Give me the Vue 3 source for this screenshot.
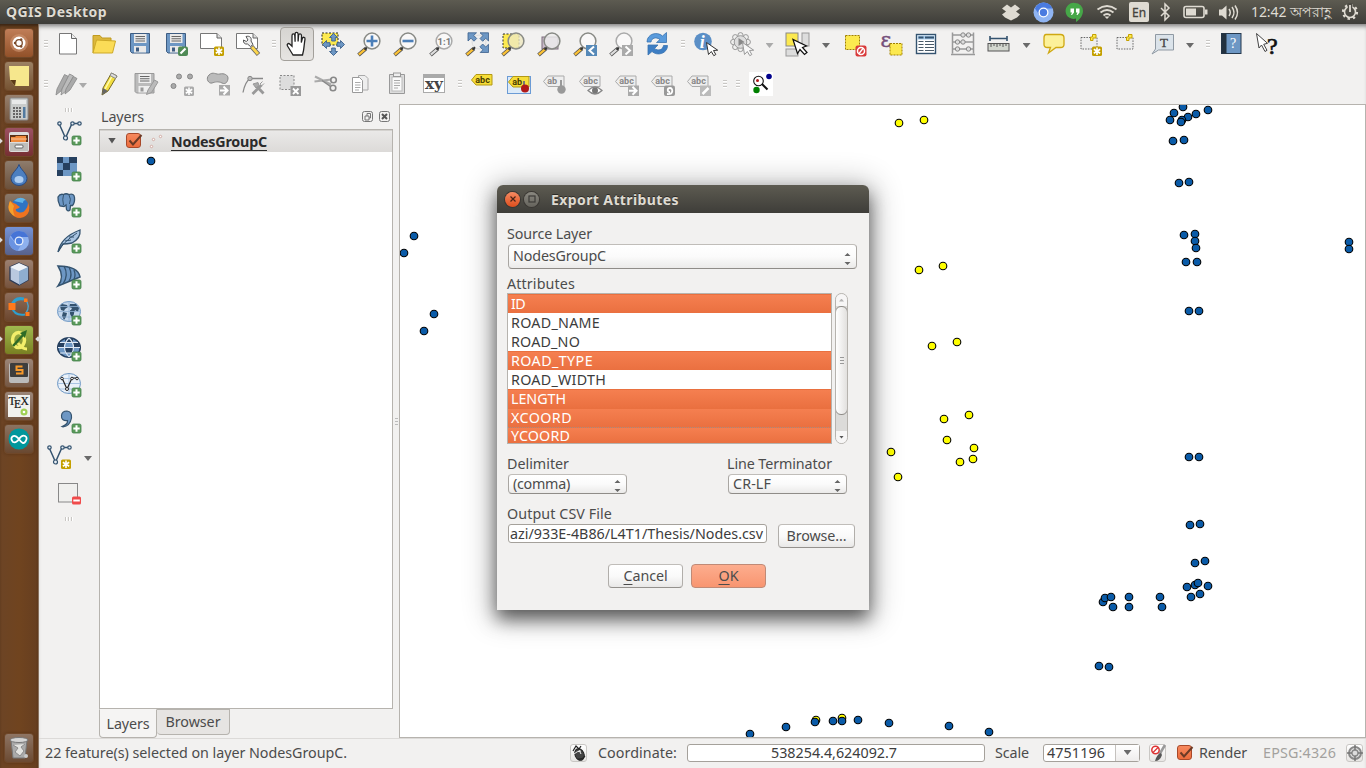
<script setup>
// Adjusts tracking so a label occupies the given width in pixels.
const vFit = {
  mounted(el, { value }) {
    const natural = el.getBoundingClientRect().width
    el.style.letterSpacing = (value - natural) / el.textContent.length + 'px'
  }
}

const plus = '<rect x="15" y="15" width="9" height="9" rx="1.5" fill="#5a9a5a" stroke="#41804a" stroke-width=".8"/><path d="M19.5 16.3v6.4M16.3 19.5h6.4" stroke="#fff" stroke-width="2"/>'
const star = (a = '#c4a000') => `<rect x="14" y="14.500" width="10" height="9.500" rx="1.5" fill="${a}"/><path d="M19 15.500v7.500M15.800 17.300l6.400 3.900M22.200 17.300l-6.400 3.900" stroke="#fff" stroke-width="1.600"/>`
const lens = (c = '#888a85', h = '#fcc235', f = '#fafafa') => `<path d="M1.500 23l7.500-6.500" stroke="#555" stroke-width="3.800"/><path d="M1.800 22.700l6.500-5.600" stroke="${h}" stroke-width="2.200"/><path d="M7.500 17.800l3-3" stroke="#333" stroke-width="2"/><circle cx="15" cy="9" r="7.900" fill="${f}" fill-opacity=".8" stroke="${c}" stroke-width="1.500"/>`
const floppy = (a, b, l) => `<path d="M2.500 1.500h19v19.500h-17.500l-1.500-1.500z" fill="${a}" stroke="${b}"/><rect x="6" y="2" width="12.500" height="9" fill="${l}"/><path d="M7.500 4.500h9.500M7.500 6.800h9.500M7.500 9h9.500" stroke="#666" stroke-width="1.100"/><rect x="6" y="14" width="12" height="6.500" fill="${l}"/><rect x="8" y="15.500" width="3" height="4" fill="${b}"/>`
const cursor = (f = '#fff', s = '#333') => `<path d="M12.500 10.500l2 12 2.800-3 2.500 4.200 2-1.200-2.300-4 4.200-.3z" fill="${f}" stroke="${s}"/>`
const tag = (f, s, t, txt = 'abc') => `<path d="M.5 9.500l4.500-5.500h16v10.500h-16z" fill="${f}" stroke="${s}"/><text x="4.300" y="12" font-family="Roboto" font-size="9" font-weight="700" fill="${t}">${txt}</text>`
const gtag = tag('#eee', '#aaa', '#888')
const vee = '<path d="M2 2.500l6.500 14.500 6.500-14.500h7" fill="none" stroke="#34536f" stroke-width="1.500"/><g fill="#e8eef5" stroke="#34536f" stroke-width="1.200"><circle cx="2.500" cy="2.500" r="1.700"/><circle cx="8.500" cy="17" r="2"/><circle cx="15.500" cy="2.500" r="1.700"/><circle cx="22.500" cy="2.500" r="1.700"/></g>'
const sheet = '<path d="M.5 1.500h16.500l4.500 4.500v10.500h-21z" fill="#fff" stroke="#777"/><path d="M17 1.500v4.500h4.500" fill="#ddd" stroke="#666"/>'

const icons = {
  new: '<path d="M3.500 1.500h12l5 5v15.500h-17z" fill="#fff" stroke="#777"/><path d="M15.500 1.500v5h5" fill="#eee" stroke="#666"/>',
  open: '<path d="M1 21V3.500h7l2 2.500h9v4" fill="#dcb73d" stroke="#c09b20"/><path d="M1 21l3.500-13 19 1-3 12z" fill="#fbdc57" stroke="#cda927"/>',
  save: floppy('#6d97c4', '#3e5d82', '#e9e9e9'),
  saveas: floppy('#6d97c4', '#3e5d82', '#e9e9e9') + '<rect x="14" y="14.500" width="10" height="9.500" rx="2" fill="#4f8a55"/><path d="M16.500 21.500l5-5" stroke="#fff" stroke-width="2.200"/>',
  composer: sheet + star(),
  manager: sheet + '<path d="M15.500 14.500l7 8" stroke="#666" stroke-width="4.500"/><path d="M16 15l6 7" stroke="#fcd64c" stroke-width="2.800"/><path d="M10 4.500c3.500-1 6 1 5 4.500l2 3.500-2.500 2-3-2.500c-2.500.5-4.500-1-4-4l2.800 1.500 1.700-1.500z" fill="#eee" stroke="#555"/>',
  pan: '<path d="M8 23l-5.500-9c-1-1.600.5-3.400 2.500-1.800l2 2V3.700c0-2.400 2.600-2.400 2.800 0l.3 6V2c0-2.300 2.800-2.300 3 0v7.500l.5-6c.2-2.200 2.900-2 2.900.2l-.2 6.800 1-4c.7-2 3-1.400 2.700.6-.8 5-1 9-1.500 11.500L17.500 23z" fill="#fff" stroke="#222" stroke-width="1.300"/>',
  pansel: '<rect x="1" y="1" width="16" height="12" fill="#fce94f" stroke="#222" stroke-dasharray="2 1.500"/><g fill="#6d97c4" stroke="#3b608b" stroke-width=".9"><path d="M12.500 1.500l4 4h-2.200v3.500h-3.600V5.500H8.500zM12.500 23.500l-4-4h2.200V16h3.600v3.500h2.200zM1.500 12.500l4-4v2.200H9v3.600H5.500v2.200zM23.500 12.500l-4-4v2.200H16v3.600h3.500v2.200z"/></g>',
  zin: lens() + '<path d="M15 3.500v11M9.500 9h11" stroke="#4c7fb8" stroke-width="2.600"/>',
  zout: lens() + '<path d="M9.500 9h11" stroke="#4c7fb8" stroke-width="2.600"/>',
  z11: lens('#aaa', '#ddd') + '<text x="8.500" y="12.500" font-family="Roboto" font-size="9.500" font-weight="700" fill="#777">1:1</text>',
  zfull: '<circle cx="14" cy="10" r="7" fill="#eee" stroke="#ddd"/><g fill="#6d97c4" stroke="#3b608b" stroke-width=".8"><path d="M3 .8h8.500l-2.800 2.700 3 3-2.700 2.700-3-3L3 9zM23.500.8V9l-2.800-2.700-3 3L15 6.500l3-3L15 .8zM23.500 20.500h-8.300l2.700-2.700-3-3 2.800-2.800 3 3 2.800-2.700z"/></g><path d="M1.500 23l7.500-6.500" stroke="#555" stroke-width="3.800"/><path d="M1.800 22.700l6.500-5.600" stroke="#fcc235" stroke-width="2.200"/><path d="M7.500 17.800l2.500-2.500" stroke="#333" stroke-width="2"/>',
  zsel: '<rect x="2" y="2" width="16" height="14" fill="#fce94f" stroke="#333" stroke-dasharray="2 1.500"/>' + lens('#888a85', '#fcc235', '#eee8c0'),
  zlayer: '<rect x="5" y="5" width="16" height="12" fill="#cbbccb" stroke="#7c6c7d"/>' + lens('#888a85', '#fcc235', '#eee'),
  zlast: lens() + '<rect x="13" y="13" width="11" height="11" fill="#5689b8"/><path d="M21 14.500l-4.500 4 4.500 4" fill="none" stroke="#fff" stroke-width="2"/>',
  znext: lens('#aaa', '#ddd') + '<rect x="13" y="13" width="11" height="11" fill="#aaa"/><path d="M16.500 14.500l4.500 4-4.500 4" fill="none" stroke="#fff" stroke-width="2"/>',
  refresh: '<path d="M2 10C2 2 12-1 17.500 4l4-3.500v10h-10L15 7.500C11 4.500 6.500 6 6 10z" fill="#5a9bdc" stroke="#3a73b0" stroke-width=".8"/><path d="M22.500 13.500c0 8-10 11-15.500 6l-4 3.500V13h10l-3.500 3.500c4 3 8.500 1 9-3z" fill="#3d7ec4" stroke="#3a73b0" stroke-width=".8"/>',
  info: '<circle cx="9" cy="9.500" r="8.800" fill="#5b8fc6"/><text x="5.800" y="15.500" font-family="Liberation Serif" font-size="18" font-style="italic" font-weight="700" fill="#fff">i</text>' + cursor(),
  action: '<g fill="#f0f0ef" stroke="#999"><circle cx="10.500" cy="3.200" r="2.600"/><circle cx="15.800" cy="5.200" r="2.600"/><circle cx="17.800" cy="10" r="2.600"/><circle cx="15.800" cy="15" r="2.600"/><circle cx="10.500" cy="17" r="2.600"/><circle cx="5.200" cy="15" r="2.600"/><circle cx="3.200" cy="10" r="2.600"/><circle cx="5.200" cy="5.200" r="2.600"/></g><circle cx="10.500" cy="10" r="6.300" fill="#ddd" stroke="#999"/><path d="M8.500 6l6 4-6 4z" fill="#888"/>' + cursor('#f8f8f8', '#999'),
  select: '<rect x="1" y="1" width="12" height="13" fill="#fce94f" stroke="#888"/><rect x="17" y="1" width="7" height="13" fill="#ddd" stroke="#999"/><rect x="1" y="17" width="12" height="7" fill="#ddd" stroke="#999"/><path d="M8 7.500l4.500 14 2.500-4 4.500 5 2.500-2-4.500-5 4-1.500z" fill="#fff" stroke="#111" stroke-width="1.200"/>',
  deselect: '<rect x="2.500" y="3.500" width="14" height="14" fill="#fce94f" stroke="#a08000" stroke-dasharray="2 1"/><rect x="12.500" y="13.500" width="11" height="11" rx="2" fill="#d93a3a"/><circle cx="18" cy="19" r="3.500" fill="none" stroke="#fff" stroke-width="1.500"/><path d="M20 16.500l-4 5" stroke="#fff" stroke-width="1.300"/>',
  epsilon: '<text x="1.500" y="14.500" font-family="DejaVu Serif" font-size="21" fill="#75507b" stroke="#75507b" stroke-width=".5">ε</text><rect x="11" y="11.500" width="12" height="11.500" fill="#fce94f" stroke="#a08000" stroke-dasharray="2 1"/>',
  table: '<rect x="1.500" y="2.500" width="19" height="19" fill="#fff" stroke="#34536f" stroke-width="1.400"/><rect x="2.500" y="3.500" width="17" height="4" fill="#a9cdec"/><path d="M3.500 5.500h5M10 5.500h9" stroke="#34536f" stroke-width="2"/><path d="M3.500 9.500h5M3.500 12.500h5M3.500 15.500h5M3.500 18.500h5M10 9.500h9M10 12.500h9M10 15.500h9M10 18.500h9" stroke="#4a5a68"/>',
  abacus: '<path d="M1.500.5v21M22.500.5v21M0 22.500h24M1.500 3h21M1.500 10h21M1.500 17h21" stroke="#999" stroke-width="1.500" fill="none"/><g fill="#ddd" stroke="#888"><circle cx="12" cy="3" r="2.200"/><circle cx="17.500" cy="3" r="2.200"/><circle cx="6.500" cy="10" r="2.200"/><circle cx="12" cy="10" r="2.200"/><circle cx="6.500" cy="17" r="2.200"/><circle cx="17.500" cy="17" r="2.200"/></g>',
  measure: '<path d="M3 6.500h17M3 4v5M20 4v5" stroke="#34536f" stroke-width="1.600"/><rect x="1" y="11.500" width="21" height="7.500" fill="#d3d7cf" stroke="#555"/><path d="M4 12v3M7 12v2M10 12v3M13 12v2M16 12v3M19 12v2" stroke="#555"/>',
  tip: '<path d="M4 2.500h14.500q3.500 0 3.500 3.500v6.500q0 3-3.500 3h-4.500l-7.500 5.500 2-5.500H5.500Q2 15.500 2 12.500V6q0-3.500 2-3.500z" fill="#fcf19a" stroke="#cfa812" stroke-width="1.300"/>',
  bmnew: '<rect x="3" y="5.500" width="16" height="11.500" fill="#eee" stroke="#666" stroke-dasharray="1.500 1.200"/><path d="M14.500 2.500h3.500v3.500h-3v2.500h-2.500V5h2z" fill="#fce94f" stroke="#c4a000"/>' + star(),
  bm: '<rect x="3" y="5.500" width="16" height="11.500" fill="#eee" stroke="#666" stroke-dasharray="1.500 1.200"/><path d="M14.500 2.500h3.500v3.500h-3v2.500h-2.500V5h2z" fill="#fce94f" stroke="#c4a000"/>',
  textann: '<path d="M5.500 2.500h18v15.500H8.500l-6.500 4 3.500-5z" fill="#dbe3ea" stroke="#8f99a3"/><text x="10" y="14.800" font-family="Liberation Serif" font-size="13" fill="#444" stroke="#444" stroke-width=".3">T</text>',
  help: '<rect x="2.500" y="1.500" width="19.500" height="20" fill="#6d97c4" stroke="#26394d"/><path d="M5 1.500v20" stroke="#22313f" stroke-width="5"/><text x="11" y="16" font-family="Liberation Serif" font-size="14" fill="#fff">?</text>',
  whats: '<path d="M1.500 1.500l2.500 14.500 2.500-3 3.500 6.500 2-1.200-3.300-6 3.800-1z" fill="#fff" stroke="#444"/><text x="12" y="21.500" font-family="Liberation Serif" font-size="24" fill="#111" stroke="#111" stroke-width=".7">?</text>',
  edits: '<g fill="#aaa" stroke="#888" stroke-width=".8"><path d="M1 23l1-6L9.500 2.500l4 2L6 19z"/><path d="M6 23l1-6L14.500 2l4 2L11 19z" fill="#bbb"/><path d="M10 22l1-5L18.500 4.500l3.500 2L15 18z"/></g>',
  pencil: '<path d="M4 23l1-7L13.500 1l5.500 3L10 19z" fill="#f3de3f" stroke="#776a28"/><path d="M7 17L15 2.500" stroke="#fffbb0" stroke-width="1.500"/><path d="M4 23l1-7 5 3z" fill="#666"/><path d="M13.500 1L19 4l-1.500 2.500-5.500-3z" fill="#ddd" stroke="#888"/>',
  gsave: '<g transform="translate(-1.500 0)">' + floppy('#bbb', '#999', '#eee') + '</g><path d="M12.500 22.500l1.500-4.500L20.500 8l3.500 2L17.500 20.500z" fill="#bbb" stroke="#999"/>',
  addpt: '<g fill="#aaa" stroke="#888"><circle cx="9" cy="4.500" r="2.500"/><circle cx="20" cy="4.500" r="2.500"/><circle cx="3.500" cy="14" r="2.500"/></g>' + star('#aaa'),
  movef: '<path d="M3 3c4-4 7 0 11-1s8 1 8 4-2 7-6 5-7-1-10 0S-1 7 3 3z" fill="#bbb" stroke="#888"/><rect x="13" y="13" width="11" height="10.500" fill="#aaa"/><path d="M14 18.500h6M17.500 14.500l4 4-4 4" fill="none" stroke="#fff" stroke-width="2"/>',
  node: '<path d="M1 20.500Q3 10 8 6.500h13" fill="none" stroke="#888" stroke-width="1.300"/><circle cx="8" cy="6.500" r="2.200" fill="#bbb" stroke="#888"/><path d="M10.500 22l9-9M13.500 13l8 8.500" stroke="#999" stroke-width="2.800"/><path d="M11 12l5-1.500 1 3-3 2.500zM18 12l2.500-2.500M19.500 14l2.500-2.500" fill="#aaa" stroke="#999"/>',
  delsel: '<rect x="2" y="3.500" width="14" height="14" fill="#ddd" stroke="#888" stroke-dasharray="2 1.500"/><rect x="12.500" y="14" width="10.500" height="10" fill="#999"/><path d="M15 16.500l5.500 5.500M20.500 16.500L15 22" stroke="#fff" stroke-width="1.800"/>',
  cut: '<path d="M1 4.500l16 8M.5 9.500l17-2" stroke="#aaa" stroke-width="2.200"/><circle cx="19.500" cy="8" r="2.800" fill="none" stroke="#888" stroke-width="1.600"/><circle cx="19" cy="16" r="2.800" fill="none" stroke="#888" stroke-width="1.600"/><path d="M8 8.500l8.500 6" stroke="#888" stroke-width="1.500"/>',
  copy: '<path d="M8.500 3.500h6.500l3 3V18h-9.500z" fill="#eee" stroke="#aaa"/><path d="M2.500 5.500h7l3 3V20.500h-10z" fill="#fff" stroke="#999"/><path d="M5 10.500h5.500M5 13h5.500M5 15.500h5.500M5 18h4" stroke="#aaa"/>',
  paste: '<path d="M3.500 2.500h15v19h-15z" fill="#ddd" stroke="#999"/><rect x="6" y="5" width="10" height="14" fill="#fafafa" stroke="#bbb"/><rect x="7.500" y="1" width="7" height="3.500" fill="#eee" stroke="#999"/><path d="M8 8.500h6M8 11h6M8 13.500h6M8 16h4" stroke="#aaa"/>',
  xy: '<rect x="1.500" y="2.500" width="21" height="18" fill="#fff" stroke="#aaa"/><rect x="2" y="2.500" width="20" height="3.500" fill="#aaa"/><text x="3" y="17" font-family="DejaVu Serif" font-size="15" font-weight="700" fill="#444" textLength="18" lengthAdjust="spacingAndGlyphs">xy</text>',
  label: '<g transform="translate(0 -1.500)">' + tag('#f6dd39', '#b39914', '#4a4000') + '</g>',
  labelpin: '<rect x=".5" y="4.500" width="23" height="17" fill="#dceaf8" stroke="#6b9bd5"/><g transform="translate(1 .500)">' + tag('#f6dd39', '#b39914', '#4a4000', 'ab') + '</g><path d="M17 9v5" stroke="#777" stroke-width="2"/><circle cx="18" cy="16.500" r="4" fill="#b01818"/>',
  gpin: tag('#eee', '#aaa', '#888', 'ab') + '<path d="M18 8v6" stroke="#999" stroke-width="2"/><circle cx="18.500" cy="17.500" r="4.200" fill="#999"/>',
  geye: gtag + '<path d="M9 18.500q7-7 14 0-7 7-14 0z" fill="#fff" stroke="#888" stroke-width="1.300"/><circle cx="16" cy="18.500" r="3" fill="#777"/>',
  gmove: gtag + '<rect x="13" y="13.500" width="11" height="10.500" fill="#aaa"/><path d="M14 18.800h6M17.500 14.800l4 4-4 4" fill="none" stroke="#fff" stroke-width="2"/>',
  grot: gtag + '<rect x="13" y="13.500" width="11" height="10.500" rx="2" fill="#999"/><path d="M16 22c7 1 6-6 3-6s-3 4 0 4" fill="none" stroke="#fff" stroke-width="1.800"/>',
  gedit: gtag + '<rect x="13" y="13.500" width="11" height="10.500" fill="#bbb"/><path d="M15.500 22l6-6" stroke="#fff" stroke-width="2.500"/>',
  plugin: '<rect width="24" height="24" fill="#fff"/><circle cx="9.500" cy="9" r="4.800" fill="none" stroke="#111" stroke-width="1.100"/><path d="M13 12l5.500 5.500" stroke="#111" stroke-width="2"/><circle cx="8.500" cy="8.500" r="1.500" fill="#b01818"/><circle cx="20" cy="4.500" r="2.800" fill="#00008b"/><circle cx="7.500" cy="18" r="3.200" fill="#008000"/>',
  vector: vee + plus,
  raster: '<rect width="20" height="19" fill="#6d97c4"/><path d="M0 0h6v6H0zM12 0h8v6h-8zM6 6h7v7H6zM0 13h6v6H0z" fill="#26405f"/>' + plus,
  pg: '<path d="M1 4Q3 .5 6.500 1.500 9 0 12 1.500q5-1.500 5.500 3 .5 5-2 8h-2l-.500 4.500q-2 2-3.500-.500l-.500-4.500-2 1.500-4-.500Q.5 8 1 4z" fill="#6d97c4" stroke="#34536f" stroke-width="1.300"/><path d="M6.500 2Q5 6 6.500 12M12 2q2.500 4 .5 9" fill="none" stroke="#34536f"/>' + plus,
  feather: '<path d="M1 23Q4 8 23 1q1 8-8 13-5 1-9 1z" fill="#a9c4e2" stroke="#34536f" stroke-width="1.300"/><path d="M1 23Q6 13 20 4M8 12l6-1M12 8l5 0" fill="none" stroke="#34536f"/>' + plus,
  sail: '<path d="M1 1Q21 1 23 12L1 21Q8 12 1 1z" fill="#6d97c4" stroke="#34536f" stroke-width="1.500"/><path d="M7 1q5 9-1 18M12 2q4 8 0 14M17 5q2 5 0 9" fill="none" stroke="#34536f" stroke-width="1.300"/>' + plus,
  wms: '<ellipse cx="12" cy="10.500" rx="11.500" ry="10" fill="#c4d7ec" stroke="#6d97c4"/><path d="M3 5l2-2 5 1 1 2-3 2-1 2-3-1zM6 11l4 1-1 4-2 3-2-4zM13 3l6 0 3 4-1 4-3-2-1 3-3-3 1-2-3-1zM13 9l4 1 0 3-2 4-2-4z" fill="#34536f"/><path d="M0 10.500h24M12 0v21M2 5.500h20M2 16h20" stroke="#8fb0d4" stroke-width=".8"/>' + plus,
  wcs: '<ellipse cx="12" cy="10.500" rx="11.300" ry="9.800" fill="#6d97c4" stroke="#26405f" stroke-width="1.500"/><path d="M2 5.500h6v5H1zM16 5.500h6l1 5h-7zM8 11h8v5H8zM8 1.500h8l0 4H8z" fill="#26405f"/><path d="M1 10.500h22M3 5.500h18M3 16h18M12 1q-9 9 0 19M12 1q9 9 0 19" fill="none" stroke="#dfe9f5" stroke-width="1.100"/>' + plus,
  wfs: '<ellipse cx="12" cy="10.500" rx="11.500" ry="10" fill="#eaf1f9" stroke="#6d97c4"/><path d="M1 10.500h22M3 5.500h18M3 16h18M12 1v19" stroke="#a9c4e2"/><path d="M5 5l5 11 5-11h5" fill="none" stroke="#222" stroke-width="1.200"/><g fill="#fff" stroke="#222"><circle cx="5" cy="5.500" r="1.300"/><circle cx="10" cy="16" r="1.500"/><circle cx="15" cy="5.500" r="1.300"/><circle cx="20" cy="5.500" r="1.300"/></g>' + plus,
  comma: '<path d="M5 17.500q6-2 5.500-6Q4 12 4.500 6.500 5 2 10 2q5 .5 4.500 7Q13 17 6 18z" fill="#6d97c4" stroke="#34536f" stroke-width="1.200"/>' + plus,
  newvec: vee + star(),
  remove: '<rect x="1.500" y="2.500" width="19" height="18.500" fill="#f0f0ee" stroke="#888"/><rect x="15" y="15.500" width="9" height="8" rx="1.500" fill="#f04b4b"/><path d="M16.300 19.500h6.500" stroke="#fff" stroke-width="2"/>'
}

const cell = n => ({ n, w: 36 })
const cells = s => s.split(' ').map(cell)
const grip = (w = 13) => ({ grip: true, w })
const arrow = (w, dim) => ({ arrow: true, w, dim })

const row1 = [grip(11), ...cells('new open save saveas composer manager'), grip(), { n: 'pan', w: 36, on: true },
  ...cells('pansel zin zout z11 zfull zsel zlayer zlast znext refresh'), grip(), ...cells('info action'), arrow(19, true),
  cell('select'), arrow(22), ...cells('deselect epsilon table abacus measure'), arrow(19), ...cells('tip bmnew bm textann'),
  arrow(20), grip(), ...cells('help whats')]
const row2 = [grip(11), { w: 5 }, { n: 'edits', w: 24 }, arrow(8, true), { w: 5 },
  ...cells('pencil gsave addpt movef node delsel cut copy paste xy'), grip(),
  ...cells('label labelpin gpin geye gmove grot gedit'), grip(), grip(), cell('plugin')]
const side = ['vector', 'raster', 'pg', 'feather', 'sail', 'wms', 'wcs', 'wfs', 'comma']

const launcher = [
  { bg: '#b5673a', s: '<circle cx="14" cy="14" r="9" fill="#cf9673" opacity=".6"/><circle cx="14" cy="14" r="6.500" fill="#fff"/><circle cx="14" cy="14" r="3.300" fill="none" stroke="#7b4a2a" stroke-width="1.300"/><g fill="#7b4a2a"><circle cx="10" cy="14" r="1.200"/><circle cx="16.200" cy="10.500" r="1.200"/><circle cx="16.200" cy="17.500" r="1.200"/></g>' },
  { bg: '#8a6a48', s: '<path d="M4 4h20v20H10l-5-6z" fill="#f6e78d"/><path d="M10 24l-5-6h6z" fill="#5b3a18"/>' },
  { bg: '#856a55', s: '<rect x="5" y="3" width="18" height="22" rx="1" fill="#c9cccb" stroke="#888"/><rect x="7" y="5" width="14" height="4" fill="#e8eaea"/><g fill="#666"><path d="M8 12h2v2H8zM11 12h2v2h-2zM14 12h2v2h-2zM8 15h2v2H8zM11 15h2v2h-2zM14 15h2v2h-2zM8 18h2v2H8zM11 18h2v2h-2zM14 18h2v2h-2zM8 21h2v2H8zM11 21h2v2h-2zM14 21h2v2h-2z"/></g><path d="M18 12h2.500v11H18z" fill="#527a9f"/>' },
  { bg: '#8b3348', run: true, s: '<rect x="4" y="4" width="20" height="20" rx="2" fill="#ddd"/><path d="M5 7h18v7H5z" fill="#5b3218"/><path d="M6 9h4l1-1h10v6H6z" fill="#f08a3c"/><path d="M6 11h16" stroke="#f9c39a"/><rect x="5" y="15" width="18" height="8" fill="#bfbfbb"/><rect x="10" y="17" width="8" height="3" rx="1" fill="#fff" stroke="#666"/>' },
  { bg: '#7a6553', s: '<path d="M14 3.500c1.500 5 8 9 8 14a8 7 0 01-16 0c0-5 6.500-9 8-14z" fill="#4c7fc0" stroke="#294a80"/><ellipse cx="14" cy="18.500" rx="4.500" ry="3.500" fill="#aecdf0"/>' },
  { bg: '#75604f', s: '<circle cx="15" cy="13" r="9" fill="#2f74c4"/><path d="M9 7q6-6 12-1-3 0-3 3z" fill="#5fb3e8"/><path d="M5 7q-3 7 0 11 4 6 10 6 7-1 9-7 1-4-1-9 0 5-2 7-3 5-8 3-3-1-2-3 2 0 4-2-2-1-4-3-3-1-6-3z" fill="#ee7320"/><path d="M5 7q-3 7 0 11 2 3 5 4-3-5-1-10z" fill="#f5a02c"/>' },
  { bg: '#5c80d0', run: true, s: '<circle cx="14" cy="14" r="10" fill="#8db0ee"/><path d="M14 4a10 10 0 019.300 6H14a4 4 0 00-3.700 5.500L5.700 8.500A10 10 0 0114 4z" fill="#4674d6"/><path d="M5 10a10 10 0 007.500 14l3.500-6q-4 1-5.500-2z" fill="#6a93e2"/><circle cx="14" cy="14" r="4.500" fill="#e7eefb"/><circle cx="14" cy="14" r="3.200" fill="#4f81e0"/>' },
  { bg: '#8a6a58', s: '<path d="M14 3l9 4v13l-9 5-9-5V7z" fill="#b9c9df" stroke="#2c3b56" stroke-width="1.300"/><path d="M14 11l9-4v13l-9 5z" fill="#8faecf"/><path d="M14 3l9 4-9 4-9-4z" fill="#eff4fa"/>' },
  { bg: '#7a553f', s: '<path d="M7 13Q9 4 19 6" fill="none" stroke="#2f9fce" stroke-width="3"/><path d="M7 14Q9 23 20 21.500" fill="none" stroke="#2f9fce" stroke-width="2"/><path d="M20 6q6 7 1 14" fill="none" stroke="#4aa3cc" stroke-width="1.300"/><path d="M3.500 10h7v7h-7zM19 5.500h3.500V9H19zM20.500 19h4v4h-4z" fill="#ff7a1c"/>' },
  { bg: '#8fae2f', run: true, focus: true, s: '<ellipse cx="13.500" cy="14" rx="6" ry="7.500" fill="none" stroke="#f3ee6a" stroke-width="3.500"/><path d="M13 17q4 6 9 6" fill="none" stroke="#f3ee6a" stroke-width="3"/><path d="M8 20L19 8" stroke="#2c6b26" stroke-width="2.500"/><path d="M15 7l7-3-2 8z" fill="#2c6b26"/>' },
  { bg: '#8a7060', s: '<rect x="4" y="4" width="20" height="20" rx="2" fill="#bbb"/><rect x="5" y="4" width="18" height="14" rx="1" fill="#3d3d3d"/><path d="M17.500 7.500h-6v3.500h6v3.500h-6.500" fill="none" stroke="#f89a2c" stroke-width="2"/>' },
  { bg: '#8a7060', s: '<rect x="3" y="3" width="22" height="22" fill="#f1f1ee"/><g font-family="Liberation Serif" font-size="11.500" fill="#111" stroke="#111" stroke-width=".2"><text x="3.500" y="13">T</text><text x="9" y="16">E</text><text x="15.500" y="13">X</text></g><circle cx="19" cy="20" r="3.500" fill="#9fd154"/><circle cx="19" cy="20" r="1.300" fill="#fff"/>' },
  { bg: '#775a45', s: '<circle cx="14" cy="14" r="10.500" fill="#00979c"/><path d="M14 14q-4-4.500-6.500-2.500T8 17q3 1.500 6-3 3-4.500 6-3t.500 5.500T14 14z" fill="none" stroke="#fff" stroke-width="1.800"/>' }
]
const trash = '<path d="M6 6h16l-2 18H8z" fill="#aaa" stroke="#777"/><ellipse cx="14" cy="6" rx="9" ry="2.500" fill="#d5d5d5" stroke="#777"/><path d="M8 11l5 3-3 4 5 4 4-5-3-4 4-3" fill="#e3e3e0" stroke="#8b8b8b"/><circle cx="21" cy="22" r="2" fill="#ccc"/>'

const blue = [[1183, 107], [1174, 113], [1208, 110], [1170, 120], [1196, 114], [1188, 117], [1182, 120], [1181, 122], [1173, 141], [1184, 140], [1179, 183], [1189, 182], [1184, 235], [1195, 234], [1195, 241], [1196, 248], [1186, 262], [1197, 262], [1189, 311], [1199, 311], [1349, 242], [1349, 249], [1189, 457], [1199, 457], [1190, 525], [1200, 524], [1195, 563], [1205, 561], [1187, 587], [1195, 585], [1198, 583], [1208, 586], [1191, 597], [1200, 594], [1103, 602], [1105, 598], [1111, 597], [1113, 607], [1129, 597], [1129, 607], [1160, 597], [1162, 607], [1099, 666], [1109, 667], [750, 734], [786, 727], [815, 722], [833, 721], [842, 721], [858, 720], [889, 723], [949, 726], [989, 732], [414, 236], [404, 253], [434, 314], [424, 331]]
const yellow = [[899, 123], [924, 120], [919, 270], [943, 266], [932, 346], [957, 342], [944, 419], [969, 415], [947, 440], [974, 448], [960, 462], [973, 459], [891, 452], [898, 477], [816, 720], [842, 718]]

const attrs = [['ID', 1, 14], ['ROAD_NAME', 0, 89], ['ROAD_NO', 0, 69], ['ROAD_TYPE', 1, 82], ['ROAD_WIDTH', 0, 95], ['LENGTH', 1, 55], ['XCOORD', 1, 61], ['YCOORD', 1, 59]]
</script>

<template>
  <div class="desk">
    <header class="menubar">
      <b class="app" v-fit="101">QGIS Desktop</b>
      <svg class="ind" width="260" height="24" viewBox="0 0 260 24">
        <g fill="#dfdbd2">
          <path d="M7 5l4 3 4-3 5 4-4 3 4 3-3 3-6 3-6-3-3-3 4-3-4-3z" transform="translate(0 -.500)" />
          <circle cx="43.500" cy="12.500" r="10" fill="#8fb4f2" /><path d="M43.500 2.500a10 10 0 019 6H43l-4 6-4-6a10 10 0 018.500-6z" fill="#4a7be0" /><circle cx="43.500" cy="12.500" r="5" fill="#fff" /><circle cx="43.500" cy="12.500" r="3.700" fill="#4a7be0" />
          <path d="M75 3a8 8 0 018 8c0 5-4 9-7 11v-3.500A8 8 0 1175 3z" fill="#46a748" /><path d="M70.500 8.500h3.500v4l-2 2.500h-1l1-2.500h-1.500zM76 8.500h3.500v4l-2 2.500h-1l1-2.500H76z" fill="#fff" />
          <g fill="none" stroke="#dfdbd2" stroke-width="1.800"><path d="M97.500 9.500q9.500-7 19 0" /><path d="M100.500 12.500q6.500-5 13 0" /><path d="M103.500 15.500q3.500-3 7 0" /></g><path d="M104.500 16.500h5l-2.500 2.500z" />
          <rect x="129" y="2" width="20" height="20" rx="2" />
          <path d="M161 8l8 8-4 4V4l4 4-8 8" fill="none" stroke="#dfdbd2" stroke-width="1.500" />
          <rect x="184" y="6.500" width="20" height="11" rx="2" fill="none" stroke="#dfdbd2" stroke-width="1.600" /><rect x="186" y="8.500" width="10" height="7" /><path d="M205 9.500h2.500v5H205z" />
          <path d="M219 9.500h3l4.500-4v14l-4.500-4h-3z" /><path d="M229 9q2.500 3.500 0 7M232 7q4 5.500 0 11M235 5.500q5 7 0 14" fill="none" stroke="#dfdbd2" stroke-width="1.500" />
        </g>
        <text x="132" y="17.200" font-family="Noto Sans" font-size="13" fill="#44423c" stroke="#44423c" stroke-width=".3" textLength="14" lengthAdjust="spacingAndGlyphs">En</text>
      </svg>
      <span class="clock" v-fit="77">12:42 অপরাহ্ণ</span>
      <svg class="gear" width="18" height="18" viewBox="0 0 18 18"><circle cx="9" cy="9" r="5.500" fill="none" stroke="#dfdbd2" stroke-width="1.600" /><circle cx="9" cy="9" r="7" fill="none" stroke="#dfdbd2" stroke-width="2.200" stroke-dasharray="2.400 3.100" /><path d="M9 0v7" stroke="#4e4c45" stroke-width="4.500" /><path d="M9 2v7" stroke="#dfdbd2" stroke-width="1.800" /></svg>
    </header>

    <div class="below">
      <nav class="launcher">
        <div v-for="(l, i) in launcher" :key="i" class="slot">
          <i v-if="l.run" class="pip" />
          <svg class="tile" :style="{ backgroundColor: l.bg }" width="28" height="28" viewBox="0 0 28 28" v-html="l.s" />
          <i v-if="l.focus" class="pip right" />
        </div>
        <div class="slot last"><svg class="tile" width="28" height="28" viewBox="0 0 28 28" v-html="trash" /></div>
      </nav>

      <main class="win">
        <div v-for="(r, k) in [row1, row2]" :key="k" class="bar">
          <div v-for="(t, i) in r" :key="i" class="cell" :style="{ width: t.w + 'px' }">
            <i v-if="t.grip" class="grip" />
            <i v-else-if="t.arrow" class="arr" :class="{ dim: t.dim }" />
            <span v-else-if="t.n" class="btn" :class="{ on: t.on }"><svg width="24" height="24" viewBox="0 0 24 24" v-html="icons[t.n]" /></span>
          </div>
        </div>

        <div class="work">
          <aside class="side">
            <i class="vgrip top" />
            <div v-for="n in side" :key="n" class="scell"><svg width="24" height="24" viewBox="0 0 24 24" v-html="icons[n]" /></div>
            <div class="scell new"><svg width="24" height="24" viewBox="0 0 24 24" v-html="icons.newvec" /><i class="arr" /></div>
            <div class="scell"><svg width="24" height="24" viewBox="0 0 24 24" v-html="icons.remove" /></div>
            <i class="vgrip" />
          </aside>

          <section class="dock">
            <div class="dhead">
              <span v-fit="43">Layers</span>
              <svg width="29" height="12" viewBox="0 0 29 12" fill="none" stroke="#777"><rect x=".5" y=".5" width="10" height="10" rx="2" /><path d="M3 5h4v4H3zM5 5V2.500h3.500V7H7" /><rect x="17.500" y=".5" width="10" height="10" rx="2" /><path d="M20 3l5 5M25 3l-5 5" stroke="#555" stroke-width="2" /></svg>
            </div>
            <div class="tree">
              <div class="trow">
                <i class="arr" />
                <span class="check"><svg width="17" height="17" viewBox="0 0 17 17"><path d="M3.500 8.500l3.500 4 8.500-9.500" fill="none" stroke="#6b3a26" stroke-width="2" /></svg></span>
                <svg class="pts" width="14" height="14" viewBox="0 0 14 14" fill="#fff" stroke="#c99a90" stroke-width=".8"><circle cx="1.500" cy="11.500" r="1.200" /><circle cx="3.500" cy="4.500" r="1.200" /><circle cx="10.500" cy="1.500" r="1.200" /></svg>
                <b><span v-fit="96">NodesGroupC</span></b>
              </div>
              <svg class="sym" width="10" height="10" viewBox="0 0 10 10"><circle cx="5" cy="5" r="3.800" fill="#0a5ba8" stroke="#000" stroke-width="1.100" /></svg>
            </div>
            <div class="tabs"><div class="tab act"><span v-fit="43">Layers</span></div><div class="tab"><span v-fit="55">Browser</span></div></div>
          </section>
          <div class="split"><i /><i /><i /></div>
          <section class="canvas">
            <svg width="966" height="632" viewBox="400 105 966 632">
              <g fill="#ffff00" stroke="#000" stroke-width="1.100"><circle v-for="(p, i) in yellow" :key="i" :cx="p[0]" :cy="p[1]" r="3.800" /></g>
              <g fill="#0a5ba8" stroke="#000" stroke-width="1.100"><circle v-for="(p, i) in blue" :key="i" :cx="p[0]" :cy="p[1]" r="3.800" /></g>
            </svg>
          </section>
        </div>

        <footer class="status">
          <span class="msg"><span v-fit="302">22 feature(s) selected on layer NodesGroupC.</span></span>
          <span class="sbtn"><svg width="16" height="18" viewBox="0 0 16 18"><ellipse cx="8.500" cy="10.500" rx="4.500" ry="6" transform="rotate(-25 8.500 10.500)" fill="#444" stroke="#222" /><path d="M3 10q3-3 7-3M8 6l2 4" stroke="#eee" fill="none" /><path d="M2 7l3-5 3 3 2-3M7 15q4 1 7-3" stroke="#222" stroke-width="1.200" fill="none" /></svg></span>
          <span class="coordl"><span v-fit="79">Coordinate:</span></span>
          <span class="field coord"><span v-fit="126">538254.4,624092.7</span></span>
          <span class="scalel"><span v-fit="34">Scale</span></span>
          <span class="field scale"><span v-fit="58">4751196</span><em><i class="arr" /></em></span>
          <span class="sbtn brush"><svg width="16" height="18" viewBox="0 0 16 18"><path d="M15 1L9 11" stroke="#999" stroke-width="2.500" /><path d="M11 9q-4 1-6 8 5 0 7-6z" fill="#555" /><circle cx="5.500" cy="6" r="3.700" fill="#fff" stroke="#d33" stroke-width="1.500" /><path d="M8 3.500l-5 5" stroke="#d33" stroke-width="1.300" /></svg></span>
          <span class="check rc"><svg width="17" height="17" viewBox="0 0 17 17"><path d="M3.500 8.500l3.500 4 8.500-9.500" fill="none" stroke="#6b3a26" stroke-width="2" /></svg></span>
          <span class="render"><span v-fit="48">Render</span></span>
          <span class="epsg"><span v-fit="73">EPSG:4326</span></span>
          <span class="sbtn crs"><svg width="16" height="18" viewBox="0 0 16 18" fill="none"><circle cx="8" cy="9" r="6" fill="#ddd" stroke="#888" stroke-width="2" /><circle cx="8" cy="9" r="3" stroke="#888" stroke-width="1.300" /><path d="M0 9h5M11 9h5M8 1v5M8 12v5" stroke="#777" stroke-width="1.500" /></svg></span>
        </footer>
      </main>
    </div>

    <div class="dialog">
      <div class="dtitle">
        <span class="wb close"><svg width="8" height="8" viewBox="0 0 8 8"><path d="M1.500 1.500l5 5M6.500 1.500l-5 5" stroke="#4a2417" stroke-width="1.200" /></svg></span>
        <span class="wb max"><svg width="8" height="8" viewBox="0 0 8 8"><rect x="1" y="1" width="6" height="6" fill="none" stroke="#3c3b37" stroke-width="1.200" /></svg></span>
        <b v-fit="128">Export Attributes</b>
      </div>
      <div class="body">
        <label><span v-fit="85">Source Layer</span></label>
        <div class="combo big"><span v-fit="93">NodesGroupC</span><svg width="7" height="14" viewBox="0 0 7 14"><path d="M.5 4h6L3.500 1zM.5 10h6l-3 3z" fill="#666" /></svg></div>
        <label class="la"><span v-fit="68">Attributes</span></label>
        <div class="listwrap">
          <ul class="list">
            <li v-for="a in attrs" :key="a[0]" :class="{ sel: a[1], cur: a[0] === 'YCOORD' }"><span v-fit="a[2]">{{ a[0] }}</span></li>
          </ul>
          <div class="sb">
            <div class="sbb"><i class="up" /></div>
            <div class="thumb"><i /><i /><i /></div>
            <div class="trough" />
            <div class="sbb"><i class="down" /></div>
          </div>
        </div>
        <div class="pair">
          <div><label><span v-fit="62">Delimiter</span></label><div class="combo"><span v-fit="57">(comma)</span><svg width="7" height="14" viewBox="0 0 7 14"><path d="M.5 4h6L3.500 1zM.5 10h6l-3 3z" fill="#666" /></svg></div></div>
          <div><label><span v-fit="105">Line Terminator</span></label><div class="combo"><span v-fit="38">CR-LF</span><svg width="7" height="14" viewBox="0 0 7 14"><path d="M.5 4h6L3.500 1zM.5 10h6l-3 3z" fill="#666" /></svg></div></div>
        </div>
        <label class="lo"><span v-fit="105">Output CSV File</span></label>
        <div class="out">
          <div class="path"><span v-fit="253">azi/933E-4B86/L4T1/Thesis/Nodes.csv</span></div>
          <div class="push browse"><span v-fit="60">Browse...</span></div>
        </div>
        <div class="acts">
          <div class="push"><span v-fit="44"><u>C</u>ancel</span></div>
          <div class="push ok"><span v-fit="20"><u>O</u>K</span></div>
        </div>
      </div>
    </div>
  </div>
</template>

<style>
body { margin: 0; overflow: hidden; }
</style>

<style scoped>
* { box-sizing: border-box; }
.desk { position: relative; width: 1366px; height: 768px; overflow: hidden; display: flex; flex-direction: column; background: #f2f1f0; font: 14.3px/18px "Noto Sans", "Open Sans", sans-serif; color: #4c4c4c; }
.desk span, .desk b { white-space: nowrap; }
svg { display: block; flex: none; overflow: visible; }
span, b { display: inline-block; }

.menubar { height: 24px; flex: none; display: flex; align-items: center; background: linear-gradient(#5d5b51, #3e3d39); color: #dfdbd2; padding-left: 6px; }
.app { font-size: 14px; text-shadow: 0 -1px #2d2c28; }
.ind { margin-left: 893px; }
.clock { position: relative; margin-left: -9px; width: 78px; font-size: 14px; }
.gear { margin-left: 12px; }

.below { flex: 1; min-height: 0; display: flex; }
.launcher { width: 39px; flex: none; padding-top: 2px; background: linear-gradient(90deg, #6c4425, #70441f 50%, #663e20); border-right: 1px solid #8a725f; display: flex; flex-direction: column; box-shadow: inset 0 3px 3px -1px #3a2513; }
.slot { height: 33px; flex: none; display: flex; align-items: center; padding-left: 5px; position: relative; }
.slot.last { margin-top: auto; margin-bottom: 4px; }
.tile { border-radius: 3px; background-color: #7a5c48; background-image: linear-gradient(rgba(255,255,255,.15), rgba(80,40,10,.35)); box-shadow: 0 0 0 1px rgba(150,105,75,.3), 0 0 3px 1px rgba(60,30,10,.45); }
.pip { position: absolute; left: -2px; top: 14px; width: 4px; height: 4px; background: #ddd; transform: rotate(45deg); }
.pip.right { left: 36px; }

.win { flex: 1; min-width: 0; display: flex; flex-direction: column; box-shadow: inset 0 5px 5px -3px #777; }
.bar { height: 40px; flex: none; display: flex; align-items: center; }
.cell { flex: none; height: 34px; display: flex; align-items: center; justify-content: center; }
.btn { flex: none; width: 34px; height: 34px; display: flex; align-items: center; justify-content: center; border: 1px solid transparent; border-radius: 4px; }
.btn.on { border-color: #a3a09b; background: linear-gradient(#d6d4d1, #e6e4e2); }
.grip { width: 4px; height: 8px; margin-left: 3px; background: repeating-linear-gradient(#c9c7c4 0 1px, #fff 1px 2px, transparent 2px 3px); }
.arr { width: 8px; height: 5px; background: #6a6a6a; clip-path: polygon(0 0, 100% 0, 50% 100%); flex: none; margin-top: 3px; }
.arr.dim { background: #aaa; }

.work { flex: 1; min-height: 0; display: flex; }
.side { width: 60px; flex: none; display: flex; flex-direction: column; align-items: center; }
.vgrip { height: 4px; width: 8px; margin: 6px 0 0; background: repeating-linear-gradient(90deg, #c9c7c4 0 1px, #fff 1px 2px, transparent 2px 3px); }
.vgrip.top { margin: 4px 0 3px; }
.scell { height: 36px; flex: none; display: flex; align-items: center; }
.scell.new { align-self: flex-start; padding-left: 8px; gap: 13px; }

.dock { width: 294px; flex: none; display: flex; flex-direction: column; }
.dhead { height: 25px; display: flex; align-items: center; justify-content: space-between; padding: 0 2px; }
.tree { height: 580px; background: #fff; border: 1px solid #b6b3ae; }
.trow { height: 22px; display: flex; align-items: center; background: linear-gradient(#eae9e8, #dcdad8); padding-left: 8px; border-top: 1px solid #d4d2cf; }
.trow .arr { height: 6px; margin-top: -2px; background: #555; }
.check { width: 15px; height: 15px; border: 1px solid #a8492a; border-radius: 3px; background: linear-gradient(#f6895e, #ec6c3c); }
.check svg { margin: -2px 0 0 -1px; }
.trow .check { margin-left: 10px; margin-top: -2px; }
.pts { margin-left: 9px; }
.trow b { margin-left: 7px; color: #2b2b2b; border-bottom: 1px solid #2b2b2b; line-height: 17px; }
.sym { margin: 4px 0 0 46px; }
.tabs { display: flex; height: 29px; }
.tab { height: 26px; width: 73px; border: 1px solid #b6b3ae; border-left: 0; border-radius: 0 0 4px 4px; display: flex; align-items: center; justify-content: center; background: #e6e4e2; }
.tab.act { width: 58px; height: 29px; background: #f5f4f3; border-left: 1px solid #b6b3ae; border-top-color: #f5f4f3; }
.split { width: 6px; flex: none; display: flex; flex-direction: column; align-items: center; justify-content: center; gap: 2px; }
.split i { width: 3px; height: 1px; background: #bbb; }
.canvas { flex: 1; min-width: 0; background: #fff; border: 1px solid #b6b3ae; overflow: hidden; }
.canvas svg { overflow: hidden; }

.status { height: 30px; flex: none; display: flex; align-items: center; padding: 0 0 2px 6px; border-top: 1px solid #dcdad8; }
.msg { width: 525px; }
.sbtn { width: 17px; height: 18px; border: 1px solid #c9c7c4; border-radius: 3px; background: linear-gradient(#fff, #e8e6e4); display: flex; align-items: center; justify-content: center; }
.coordl { margin-left: 11px; width: 89px; }
.field { height: 18px; border: 1px solid #a5a19b; border-radius: 3px; background: #fff; display: flex; align-items: center; color: #3c3c3c; }
.coord { width: 298px; justify-content: center; padding-right: 4px; }
.scalel { margin-left: 10px; width: 48px; }
.scale { width: 97px; padding-left: 3px; justify-content: space-between; }
.scale em { width: 24px; height: 16px; border-left: 1px solid #c5c2be; display: flex; align-items: center; justify-content: center; background: linear-gradient(#fff, #efedec); }
.scale .arr { margin-top: 0; }
.brush { margin-left: 9px; }
.rc { margin-left: 11px; }
.render { margin-left: 7px; width: 64px; }
.epsg { color: #a3a19e; width: 83px; }

.dialog { position: absolute; left: 497px; top: 185px; width: 372px; height: 425px; border-radius: 6px 6px 0 0; background: #f2f1f0; box-shadow: 0 9px 18px 0 rgba(0,0,0,.58), 0 3px 30px 6px rgba(0,0,0,.24); }
.dtitle { height: 28px; border-radius: 6px 6px 0 0; background: linear-gradient(#5d5b51, #3e3d39); display: flex; align-items: center; padding-left: 8px; color: #dfdbd2; }
.dtitle b { margin: 2px 0 0 12px; font-size: 14px; text-shadow: 0 -1px #2d2c28; }
.wb { width: 15px; height: 15px; border-radius: 50%; display: flex; align-items: center; justify-content: center; box-shadow: 0 0 0 1px #3a3733; }
.close { background: linear-gradient(#f58a62, #df4e1d); }
.max { margin-left: 4px; background: linear-gradient(#8a8880, #65635c); }
.body { padding: 12px 0 0 10px; }
label { display: block; height: 18px; line-height: 18px; }
.combo { width: 119px; height: 20px; margin: 1px 0 0 1px; border: 1px solid #a9a6a2; border-color: #c0bdb9 #a9a6a2 #8f8c88; border-radius: 4px; background: linear-gradient(#fff, #fbfbfb 50%, #ebeae9); display: flex; align-items: center; justify-content: space-between; padding: 0 5px 0 4px; line-height: 16px; }
.combo > span { margin-top: -1px; }
.combo svg { margin-top: 4px; }
.combo.big { width: 349px; height: 25px; }
.la { margin-top: 6px; }
.listwrap { display: flex; gap: 3px; height: 151px; }
.list { width: 325px; margin: 0; padding: 0; list-style: none; border: 1px solid #b6b3ae; background: #fff; overflow: hidden; color: #3c3c3c; }
.list li { height: 19px; line-height: 19px; padding-left: 3px; }
.list .sel { background: linear-gradient(#f57f50, #ea7040); color: #fff; border-top: 1px solid #e9703f; line-height: 17px; }
.list .cur { height: 16px; border-top: 1px dotted #a98b80; line-height: 16px; }
.sb { width: 13px; border: 1px solid #b6b3ae; border-radius: 7px; display: flex; flex-direction: column; background: #dcdbd9; overflow: hidden; }
.sbb { height: 12px; background: #f7f6f6; display: flex; align-items: center; justify-content: center; }
.sbb i { width: 5px; height: 3px; background: #555; }
.up { clip-path: polygon(50% 0, 100% 100%, 0 100%); opacity: .4; }
.down { clip-path: polygon(0 0, 100% 0, 50% 100%); }
.thumb { height: 109px; margin: 0 -1px; border: 1px solid #8f8c88; border-radius: 6px; background: linear-gradient(90deg, #fff, #e2e0de); display: flex; flex-direction: column; align-items: center; justify-content: center; gap: 2px; }
.thumb i { width: 4px; height: 1px; background: #999; }
.trough { flex: 1; }
.pair { display: flex; gap: 100px; margin-top: 11px; }
.pair > div { width: 120px; }
.lo { margin-top: 11px; }
.out { display: flex; gap: 11px; padding-left: 1px; margin-top: 1px; }
.path { width: 259px; height: 19px; border: 1px solid #a5a19b; border-radius: 3px; background: #fff; line-height: 17px; padding-left: 1px; color: #3c3c3c; overflow: hidden; }
.push { width: 75px; height: 24px; border: 1px solid #b1aeaa; border-color: #c0bdb9 #b1aeaa #94918d; border-radius: 4px; background: linear-gradient(#fff, #fafafa 50%, #e9e8e7); display: flex; align-items: center; justify-content: center; }
.browse { width: 77px; }
.ok { background: linear-gradient(#fdad8e, #f89570); border-color: #c08a76; }
.acts { display: flex; gap: 8px; margin: 16px 0 0 101px; }
u { text-underline-offset: 3px; }
</style>
